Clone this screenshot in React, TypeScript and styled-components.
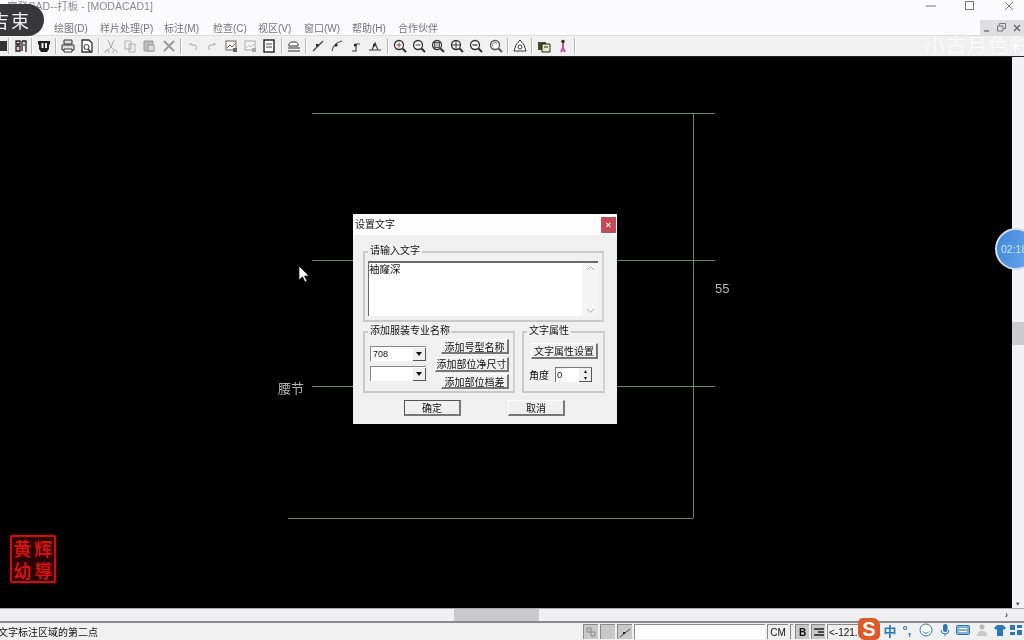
import React from "react";
import styled, { createGlobalStyle } from "styled-components";

const FONT = `"Liberation Sans", "Noto Sans CJK SC", sans-serif`;

const Global = createGlobalStyle`
  html, body { margin: 0; padding: 0; background: #000; }
  * { box-sizing: border-box; }
`;

const Page = styled.div`
  position: relative;
  width: 1024px;
  height: 640px;
  overflow: hidden;
  display: flex;
  flex-direction: column;
  font-family: ${FONT};
  background: #fbfafc;
  filter: blur(0.6px);
`;

const TitleBar = styled.div`
  height: 18px;
  display: flex;
  align-items: flex-start;
  justify-content: space-between;
  background: #fbfafc;
  color: #8b8b8b;
  font-size: 10.5px;
  line-height: 13px;
  padding-left: 7px;
`;

const WinButtons = styled.div`
  display: flex;
  color: #777;
  margin-right: -4px;
`;

const WinButton = styled.div`
  width: 39px;
  height: 12px;
  display: flex;
  align-items: center;
  justify-content: center;
`;

const MenuBar = styled.div`
  height: 17px;
  display: flex;
  align-items: center;
  justify-content: space-between;
  background: #fbfafc;
`;

const MenuItems = styled.div`
  display: flex;
  padding-left: 54px;
  gap: 11px;
  font-size: 10px;
  color: #757575;
  padding-top: 2px;
`;

const MenuItem = styled.span<{ $w: number }>`
  width: ${(p) => p.$w}px;
  white-space: nowrap;
`;

const MdiButtons = styled.div`
  width: 44px;
  height: 15px;
  margin-top: 2px;
  background: #dfdfe1;
  display: flex;
  align-items: center;
  justify-content: space-around;
  color: #777;
`;

const ToolBar = styled.div`
  height: 22px;
  display: flex;
  align-items: center;
  background: #f0f0f0;
  border-top: 1px solid #dcdcdc;
  border-bottom: 1px solid #222;
`;

const Tool = styled.div<{ $w?: number }>`
  width: ${(p) => p.$w ?? 19.2}px;
  height: 17px;
  display: flex;
  align-items: center;
  justify-content: center;
  flex: none;
  overflow: hidden;
`;

const Sep = styled.div<{ $m?: number }>`
  width: 2px;
  height: 16px;
  flex: none;
  margin: 0 ${(p) => p.$m ?? 1.5}px;
  border-left: 1px solid #b8b8b8;
  border-right: 1px solid #fff;
`;

const Watermark = styled.div`
  position: absolute;
  left: 925px;
  top: 30px;
  width: 99px;
  overflow: hidden;
  white-space: nowrap;
  font-size: 20px;
  letter-spacing: 1px;
  color: rgba(255, 255, 255, 0.92);
  font-weight: 300;
`;

const RecBadge = styled.div`
  position: absolute;
  left: -14px;
  top: 4px;
  width: 58px;
  height: 32px;
  border-radius: 16px;
  background: #38383a;
  color: #f2f2f2;
  font-size: 18px;
  letter-spacing: 2px;
  display: flex;
  align-items: center;
  justify-content: flex-end;
  padding-right: 13px;
  font-family: "Noto Sans CJK SC", serif;
`;

const Workspace = styled.div`
  flex: 1;
  display: flex;
  min-height: 0;
`;

const Canvas = styled.div`
  position: relative;
  flex: 1;
  background: #000;
`;

const VScroll = styled.div`
  width: 12px;
  background: #f2f2f4;
  display: flex;
  flex-direction: column;
  justify-content: flex-end;
  align-items: center;
  color: #555;
  font-size: 7px;
`;

const VThumb = styled.div`
  width: 12px;
  height: 23px;
  background: #cbcbcd;
  margin-bottom: 255px;
`;

const Line = styled.div<{ $x: number; $y: number; $w?: number; $h?: number }>`
  position: absolute;
  left: ${(p) => p.$x}px;
  top: ${(p) => p.$y - 57}px;
  width: ${(p) => p.$w ?? 1}px;
  height: ${(p) => p.$h ?? 1}px;
  background: #5f8c70;
`;

const CadText = styled.div<{ $x: number; $y: number }>`
  position: absolute;
  left: ${(p) => p.$x}px;
  top: ${(p) => p.$y - 57}px;
  color: #b4b4b4;
  font-size: 13px;
  line-height: 16px;
  white-space: nowrap;
`;

const Cursor = styled.svg`
  position: absolute;
  left: 298px;
  top: 208px;
`;

const Seal = styled.div`
  position: absolute;
  left: 10px;
  top: 478px;
  width: 46px;
  height: 48px;
  border: 2px solid #c80f10;
  border-radius: 2px;
  box-shadow: 0 0 2px #a00;
  display: grid;
  grid-template-columns: 1fr 1fr;
  grid-template-rows: 1fr 1fr;
  align-items: center;
  background: #2a0000;
  color: #d81010;
  font-size: 18px;
  line-height: 20px;
  font-weight: 700;
  text-align: center;
  font-family: "Noto Sans CJK TC", serif;
`;

const Bubble = styled.div`
  position: absolute;
  left: 995px;
  top: 228px;
  width: 42px;
  height: 42px;
  border-radius: 50%;
  background: linear-gradient(110deg, #3f86d8, #6aaaf0);
  border: 2px solid #cfdcea;
  color: #cfe3fa;
  font-size: 10.5px;
  display: flex;
  align-items: center;
  padding-left: 4px;
  white-space: nowrap;
`;

const Dialog = styled.div`
  position: absolute;
  left: 353px;
  top: 157px;
  width: 264px;
  height: 210px;
  background: #f0f0f0;
  color: #111;
  font-size: 10px;
  display: flex;
  flex-direction: column;
`;

const DialogTitle = styled.div`
  height: 21px;
  flex: none;
  background: #fdfdfd;
  display: flex;
  align-items: center;
  justify-content: space-between;
  padding: 0 1px 2px 2px;
`;

const CloseBtn = styled.div`
  width: 15px;
  height: 16px;
  margin-top: 2px;
  background: #c44c52;
  color: #fff;
  font-size: 9px;
  font-weight: 700;
  display: flex;
  align-items: center;
  justify-content: center;
`;

const DialogBody = styled.div`
  flex: 1;
  padding: 16px 12px 0 10px;
  display: flex;
  flex-direction: column;
`;

const Group = styled.div<{ $w: number; $h: number }>`
  position: relative;
  width: ${(p) => p.$w}px;
  height: ${(p) => p.$h}px;
  border: 2px solid #c8c8c8;
  border-right-color: #d2d2d2;
  flex: none;
`;

const Legend = styled.span`
  position: absolute;
  left: 3px;
  top: -9px;
  height: 14px;
  line-height: 14px;
  padding: 0 2px;
  background: #f0f0f0;
  white-space: nowrap;
`;

const TextArea = styled.div`
  margin: 8px 4px 0 3px;
  height: 55px;
  background: #fff;
  border-top: 2px solid #6a6a6a;
  border-left: 1px solid #6a6a6a;
  display: flex;
  justify-content: space-between;
  font-size: 10.5px;
  line-height: 12px;
`;

const ScrollTrack = styled.div`
  width: 16px;
  background: #f4f4f4;
  display: flex;
  flex-direction: column;
  justify-content: space-between;
  align-items: center;
  color: #aaa;
  padding: 2px 0;
`;

const Row = styled.div`
  display: flex;
  gap: 7px;
  margin-top: 9px;
`;

const Group2Inner = styled.div`
  display: flex;
  justify-content: space-between;
  padding: 6px 4px 0 5px;
`;

const SelectCol = styled.div`
  display: flex;
  flex-direction: column;
  gap: 5px;
  padding-top: 7px;
`;

const Select = styled.div`
  width: 56px;
  height: 15px;
  background: #fff;
  border-top: 1px solid #888;
  border-left: 1px solid #888;
  display: flex;
  justify-content: space-between;
  align-items: center;
  padding-left: 2px;
  font-size: 9px;
`;

const SelectArrow = styled.div`
  width: 13px;
  height: 13px;
  margin-left: auto;
  background: #f0f0f0;
  border-right: 1px solid #555;
  border-bottom: 1px solid #555;
  display: flex;
  align-items: center;
  justify-content: center;
  &::after {
    content: "";
    border: 3px solid transparent;
    border-top: 4px solid #111;
    border-bottom: 0;
  }
`;

const BtnCol = styled.div`
  display: flex;
  flex-direction: column;
  align-items: flex-end;
  gap: 2.5px;
`;

const Btn = styled.div<{ $w: number; $h?: number; $focus?: boolean }>`
  width: ${(p) => p.$w}px;
  height: ${(p) => p.$h ?? 15}px;
  background: #f0f0f0;
  display: flex;
  align-items: center;
  justify-content: center;
  white-space: nowrap;
  font-size: 10px;
  border-right: 2px solid #777;
  border-bottom: 2px solid #777;
  border-top: 1px solid ${(p) => (p.$focus ? "#555" : "#fff")};
  border-left: 1px solid ${(p) => (p.$focus ? "#555" : "#fff")};
`;

const Group3Inner = styled.div`
  display: flex;
  flex-direction: column;
  padding: 10px 5px 0 7px;
  gap: 8px;
`;

const AngleRow = styled.div`
  display: flex;
  align-items: center;
  gap: 6px;
  margin-left: -2px;
`;

const Spin = styled.div`
  width: 37px;
  height: 15px;
  background: #fff;
  border-top: 1px solid #777;
  border-left: 1px solid #777;
  display: flex;
  justify-content: space-between;
  padding-left: 1px;
  font-size: 9.5px;
  line-height: 13px;
`;

const SpinBtns = styled.div`
  width: 13px;
  display: flex;
  flex-direction: column;
  background: #f0f0f0;
  border-right: 1px solid #555;
  border-bottom: 1px solid #555;
  font-size: 6px;
  line-height: 7px;
  text-align: center;
`;

const DialogFooter = styled.div`
  display: flex;
  padding-left: 41px;
  gap: 47px;
  margin-top: 7px;
`;

const HScroll = styled.div`
  height: 15px;
  flex: none;
  background: #f0f0f2;
  border-top: 1px solid #aaa;
  border-bottom: 2px solid #8a8a8a;
  display: flex;
  align-items: center;
  padding-left: 454px;
  justify-content: space-between;
  padding-right: 16px;
  color: #444;
  font-size: 9px;
  font-weight: 700;
`;

const HThumb = styled.div`
  width: 85px;
  height: 12px;
  background: #c9c9cb;
`;

const StatusBar = styled.div`
  height: 17px;
  flex: none;
  background: #f0f0f0;
  display: flex;
  align-items: center;
  font-size: 10px;
  color: #111;
`;

const StatusText = styled.div`
  width: 583px;
  flex: none;
  margin-left: -2px;
  margin-right: 2px;
  white-space: nowrap;
`;

const Cell = styled.div<{ $w: number; $gray?: boolean; $white?: boolean }>`
  width: ${(p) => p.$w}px;
  height: 15px;
  flex: none;
  margin-right: 2px;
  background: ${(p) => (p.$white ? "#fff" : p.$gray ? "#c8c8c8" : "#f0f0f0")};
  border-top: 1px solid #888;
  border-left: 1px solid #888;
  display: flex;
  align-items: center;
  justify-content: center;
  white-space: nowrap;
  font-size: 10px;
`;

const ReadOut = styled(Cell)`
  justify-content: flex-start;
  padding-left: 1px;
`;

const Sogou = styled.div`
  position: absolute;
  left: 858px;
  top: 618px;
  width: 22px;
  height: 22px;
  background: #dd5a2a;
  border-radius: 5px 7px 5px 7px;
  color: #fff;
  font-size: 20px;
  font-weight: 700;
  line-height: 22px;
  text-align: center;
`;

const TrayItem = styled.div<{ $x: number }>`
  position: absolute;
  left: ${(p) => p.$x}px;
  top: 622px;
  width: 16px;
  height: 16px;
  display: flex;
  align-items: center;
  justify-content: center;
  color: #2a78b8;
  font-size: 13px;
  font-weight: 700;
`;

const S = { fill: "none", stroke: "#444", strokeWidth: 1.2 };
const Ic = ({ children }: { children: React.ReactNode }) => (
  <svg width="14" height="14" viewBox="0 0 14 14" style={{ flex: "none" }}>
    {children}
  </svg>
);

const Mag = ({ children, c = "#444" }: { children?: React.ReactNode; c?: string }) => (
  <Ic>
    <circle cx="6" cy="6" r="4.5" fill="#fff" stroke={c} strokeWidth="1.3" />
    <path d="M9.5 9.5 13 13" stroke={c} strokeWidth="2" />
    {children}
  </Ic>
);

const PatternTool = ({ d }: { d: string }) => (
  <Ic>
    <path d={d} {...S} />
    <rect x="5" y="5" width="2.4" height="2.4" fill="#222" />
  </Ic>
);

export default function App() {
  return (
    <Page>
      <Global />
      <TitleBar>
        <span>摩登CAD--打板 - [MODACAD1]</span>
        <WinButtons>
          <WinButton>
            <svg width="10" height="10"><path d="M0 5h10" stroke="#777" /></svg>
          </WinButton>
          <WinButton>
            <svg width="10" height="10"><rect x=".5" y=".5" width="8" height="8" fill="none" stroke="#777" /></svg>
          </WinButton>
          <WinButton>
            <svg width="10" height="10"><path d="M1 1l8 8M9 1l-8 8" stroke="#777" /></svg>
          </WinButton>
        </WinButtons>
      </TitleBar>
      <MenuBar>
        <MenuItems>
          <MenuItem $w={35}>绘图(D)</MenuItem>
          <MenuItem $w={53}>样片处理(P)</MenuItem>
          <MenuItem $w={38}>标注(M)</MenuItem>
          <MenuItem $w={34}>检查(C)</MenuItem>
          <MenuItem $w={35}>视区(V)</MenuItem>
          <MenuItem $w={37}>窗口(W)</MenuItem>
          <MenuItem $w={35}>帮助(H)</MenuItem>
          <MenuItem $w={42}>合作伙伴</MenuItem>
        </MenuItems>
        <MdiButtons>
          <svg width="8" height="8"><path d="M1 7h5" stroke="#777" strokeWidth="1.5" /></svg>
          <svg width="9" height="9"><path d="M2.5 2.5v-2h6v5h-2M.5 3h5.500v5h-5.500z" fill="none" stroke="#777" /></svg>
          <svg width="8" height="8"><path d="M1 1l6 6M7 1l-6 6" stroke="#666" strokeWidth="1.4" /></svg>
        </MdiButtons>
      </MenuBar>
      <ToolBar>
        <Tool $w={7}>
          <Ic><rect x="0" y="2" width="14" height="10" fill="#333" /></Ic>
        </Tool>
        <Sep $m={1} />
        <Tool $w={19}>
          <Ic><path d="M2 2h4v3H2zM2 7h4v5H2zM8 2h4v11M8 2v10" fill="#e8c8d0" stroke="#222" strokeWidth="1.300" /><path d="M3 5.500h2M9 6h2" stroke="#222" /></Ic>
        </Tool>
        <Sep $m={1} />
        <Tool $w={19}>
          <Ic><path d="M1 2h12v3l-1 1v4l-2 3H4L2 10V6L1 5z" fill="#222" /><rect x="4.500" y="4" width="2" height="5" fill="#eee" /><rect x="8" y="4" width="2" height="5" fill="#eee" /></Ic>
        </Tool>
        <Sep $m={1.5} />
        <Tool>
          <Ic><path d="M3 1h8v4H3zM1 6h12v5H1z" fill="#ddd" stroke="#333" /><path d="M3 10h8v3H3z" fill="#fff" stroke="#333" /></Ic>
        </Tool>
        <Tool>
          <Ic><path d="M2 1h7l3 3v9H2z" fill="#fff" stroke="#333" strokeWidth="1.300" /><circle cx="6.500" cy="8" r="2.500" fill="none" stroke="#333" /><path d="M8 10l3 3" stroke="#333" strokeWidth="1.500" /></Ic>
        </Tool>
        <Sep />
        <Tool>
          <Ic><path d="M4 1l3 7 3-7M3 11a2 2 0 1 0 .1 0M11 11a2 2 0 1 0 .1 0M7 8l-3 3M7 8l3 3" fill="none" stroke="#aaa" /></Ic>
        </Tool>
        <Tool>
          <Ic><path d="M2 2h6v8H2zM6 5h6v8H6z" fill="#eee" stroke="#b0b0b0" /></Ic>
        </Tool>
        <Tool>
          <Ic><path d="M2 2h9v10H2z" fill="#bbb" stroke="#999" /><rect x="6" y="6" width="6" height="6" fill="#ddd" stroke="#999" /></Ic>
        </Tool>
        <Tool>
          <Ic><path d="M2 2l10 10M12 2 2 12" stroke="#999" strokeWidth="1.800" /></Ic>
        </Tool>
        <Sep />
        <Tool>
          <Ic><path d="M3 6l2-2v2h4a3 3 0 0 1 0 5" fill="none" stroke="#aaa" /></Ic>
        </Tool>
        <Tool>
          <Ic><path d="M11 6 9 4v2H5a3 3 0 0 0 0 5" fill="none" stroke="#aaa" /></Ic>
        </Tool>
        <Tool>
          <Ic><rect x="2" y="2" width="10" height="9" fill="#f6f6f6" stroke="#666" /><path d="M3 9l3-3 2 2 3-3" stroke="#b04a4a" fill="none" /><rect x="9" y="9" width="4" height="4" fill="#666" /></Ic>
        </Tool>
        <Tool>
          <Ic><rect x="2" y="2" width="10" height="9" fill="#f6f6f6" stroke="#aaa" /><path d="M3 9l3-3 2 2 3-3" stroke="#bbb" fill="none" /><rect x="9" y="9" width="4" height="4" fill="#aaa" /></Ic>
        </Tool>
        <Tool>
          <Ic><rect x="2" y="1" width="10" height="12" fill="#fff" stroke="#222" strokeWidth="1.400" /><path d="M4 5h6M4 8h6" stroke="#444" /></Ic>
        </Tool>
        <Sep />
        <Tool>
          <Ic><path d="M2 7a3 3 0 0 1 3-4h3a3 3 0 0 1 3 4z" fill="#fff" stroke="#333" /><path d="M1 9h12M1 12h12" stroke="#333" /></Ic>
        </Tool>
        <Sep />
        <Tool><PatternTool d="M2 12 12 2" /></Tool>
        <Tool><PatternTool d="M2 12C3 6 8 3 12 2" /></Tool>
        <Tool><PatternTool d="M3 12h4V5h4" /></Tool>
        <Tool><PatternTool d="M1 11h12M4 11 7 4l3 7" /></Tool>
        <Sep />
        <Tool>
          <Mag c="#333"><path d="M3.500 6h5M6 3.500v5" stroke="#a33" /></Mag>
        </Tool>
        <Tool>
          <Mag c="#333"><path d="M3.500 6h5" stroke="#333" /></Mag>
        </Tool>
        <Tool>
          <Mag c="#333"><rect x="3.500" y="3.500" width="5" height="5" fill="#bbb" stroke="#555" /></Mag>
        </Tool>
        <Tool>
          <Mag c="#333"><path d="M1.500 6h9M6 1.500v9" stroke="#333" /></Mag>
        </Tool>
        <Tool>
          <Mag c="#333"><path d="M3.500 6h5" stroke="#777" strokeWidth="2" /></Mag>
        </Tool>
        <Tool>
          <Mag c="#555"><path d="M4 7.500a2.500 2.500 0 0 1 4-3" fill="none" stroke="#777" /></Mag>
        </Tool>
        <Sep />
        <Tool>
          <Ic><path d="M7 1 3 6 1 12h12l-2-6z" fill="#fff" stroke="#333" /><circle cx="7" cy="8" r="2" fill="none" stroke="#333" /></Ic>
        </Tool>
        <Sep />
        <Tool>
          <Ic><path d="M1 3h8v8H1z" fill="#3e4a2a" /><path d="M5 5h8v8H5z" fill="#e8e8c8" stroke="#222" /><path d="M7 8h4" stroke="#222" /></Ic>
        </Tool>
        <Tool>
          <Ic><circle cx="7" cy="2.500" r="1.800" fill="#333" /><path d="M7 4v5l-2 4M7 9l2 4" stroke="#c050a0" strokeWidth="2" fill="none" /></Ic>
        </Tool>
        <Sep />
      </ToolBar>
      <Workspace>
        <Canvas>
          <Line $x={312} $y={113} $w={403} />
          <Line $x={693} $y={113} $h={405} />
          <Line $x={288} $y={518} $w={405} />
          <Line $x={312} $y={260} $w={403} />
          <Line $x={312} $y={386} $w={403} />
          <CadText $x={715} $y={281}>55</CadText>
          <CadText $x={278} $y={381}>腰节</CadText>
          <Cursor width="12" height="18" viewBox="0 0 12 18">
            <path d="M1 1v14l3.500-3.200 2.500 5.200 2-1-2.500-5h4.500z" fill="#fff" stroke="#111" strokeWidth=".7" />
          </Cursor>
          <Seal>
            <span>黄</span>
            <span>辉</span>
            <span>幼</span>
            <span>導</span>
          </Seal>
          <Dialog>
            <DialogTitle>
              <span>设置文字</span>
              <CloseBtn>×</CloseBtn>
            </DialogTitle>
            <DialogBody>
              <Group $w={241} $h={71}>
                <Legend>请输入文字</Legend>
                <TextArea>
                  <span>袖窿深</span>
                  <ScrollTrack>
                    <svg width="9" height="6"><path d="M1 5l3.500-3.500L8 5" fill="none" stroke="#aaa" /></svg>
                    <svg width="9" height="6"><path d="M1 1l3.500 3.500L8 1" fill="none" stroke="#aaa" /></svg>
                  </ScrollTrack>
                </TextArea>
              </Group>
              <Row>
                <Group $w={152} $h={62}>
                  <Legend>添加服装专业名称</Legend>
                  <Group2Inner>
                    <SelectCol>
                      <Select>708<SelectArrow /></Select>
                      <Select><SelectArrow /></Select>
                    </SelectCol>
                    <BtnCol>
                      <Btn $w={68}>添加号型名称</Btn>
                      <Btn $w={74}>添加部位净尺寸</Btn>
                      <Btn $w={68}>添加部位档差</Btn>
                    </BtnCol>
                  </Group2Inner>
                </Group>
                <Group $w={83} $h={62}>
                  <Legend>文字属性</Legend>
                  <Group3Inner>
                    <Btn $w={67} $h={16}>文字属性设置</Btn>
                    <AngleRow>
                      角度
                      <Spin>
                        0
                        <SpinBtns>
                          <span>▴</span>
                          <span>▾</span>
                        </SpinBtns>
                      </Spin>
                    </AngleRow>
                  </Group3Inner>
                </Group>
              </Row>
              <DialogFooter>
                <Btn $w={57} $h={16} $focus>确定</Btn>
                <Btn $w={57} $h={16}>取消</Btn>
              </DialogFooter>
            </DialogBody>
          </Dialog>
        </Canvas>
        <VScroll>
          <VThumb />
          ▾
        </VScroll>
      </Workspace>
      <HScroll>
        <HThumb />
        ›
      </HScroll>
      <StatusBar>
        <StatusText>文字标注区域的第二点</StatusText>
        <Cell $w={15} $gray>
          <svg width="12" height="12"><path d="M2 2h4v4H2zM6 6h4v4H6z" fill="none" stroke="#888" /></svg>
        </Cell>
        <Cell $w={15} $gray />
        <Cell $w={15} $gray>
          <svg width="12" height="12"><path d="M1 11 11 3" stroke="#444" /><rect x="4" y="6" width="2" height="2" fill="#222" /></svg>
        </Cell>
        <Cell $w={131} $white />
        <Cell $w={21}>CM</Cell>
        <Cell $w={3} />
        <Cell $w={14} $gray><b>B</b></Cell>
        <Cell $w={14} $gray>
          <svg width="12" height="10"><path d="M1 2h10M5 5h6M1 8h10" stroke="#222" strokeWidth="1.300" /></svg>
        </Cell>
        <ReadOut $w={40}>&lt;-121.0</ReadOut>
      </StatusBar>
      <RecBadge>吉束</RecBadge>
      <Watermark>小古月色彩</Watermark>
      <Bubble>02:18</Bubble>
      <Sogou>S</Sogou>
      <TrayItem $x={882}>中</TrayItem>
      <TrayItem $x={899}>°,</TrayItem>
      <TrayItem $x={918}>
        <svg width="14" height="14"><circle cx="7" cy="7" r="6" fill="#fff" stroke="#2a78b8" /><path d="M4 8.500a3.500 3.500 0 0 0 6 0" fill="none" stroke="#2a78b8" /></svg>
      </TrayItem>
      <TrayItem $x={937}>
        <svg width="14" height="14"><rect x="5" y="1" width="4.500" height="8" rx="2" fill="#2a78b8" /><path d="M3 7a4 4 0 0 0 8 0M7 11v2" fill="none" stroke="#2a78b8" /></svg>
      </TrayItem>
      <TrayItem $x={955}>
        <svg width="14" height="12"><rect x=".5" y="1.500" width="13" height="9" rx="1" fill="#7fb0d8" stroke="#2a78b8" /><path d="M3 4.500h8M3 7.500h8" stroke="#fff" /></svg>
      </TrayItem>
      <TrayItem $x={974}>
        <svg width="14" height="14"><circle cx="7" cy="4" r="2.500" fill="#b8b8b8" /><path d="M2 13c0-7 10-7 10 0z" fill="#c8c8c8" /></svg>
      </TrayItem>
      <TrayItem $x={992}>
        <svg width="14" height="14"><path d="M4 2h6l3 3-2 2-1-1v7H4V6L3 7 1 5z" fill="#2a78b8" /></svg>
      </TrayItem>
      <TrayItem $x={1008}>
        <svg width="14" height="14"><path d="M1 2h5v5H1zM8 2h5v3H8zM1 9h5v3H1zM8 7h5v5H8z" fill="#2a78b8" /></svg>
      </TrayItem>
    </Page>
  );
}
